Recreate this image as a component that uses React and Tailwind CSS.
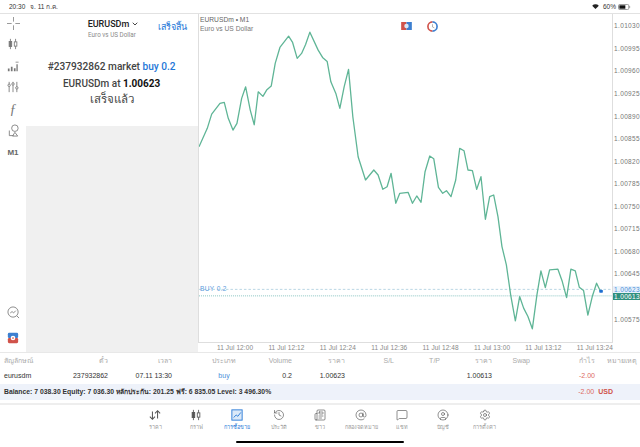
import { AtSign, ChevronDown, CircleUser, History, MessageSquare, Newspaper, Settings } from "lucide-react";

const line =
  "199,146.7 207.3,128.3 211.7,114 220,103.3 224.3,102.3 228.3,118.3 233,130 237,123.3 241.7,98.3 245.7,86.7 250.3,110 254.3,124.7 258.3,91.7 263,96.3 266.7,90 271.3,86 275.3,63.3 280,47.3 288.7,36 292.7,42.3 297.3,58.3 301.7,53.3 305.7,44.3 310,32 318.3,50 322.7,57.3 327.3,61.3 331,81.7 336,93.3 340,108.3 344.3,86.7 348.7,69.3 353,116.7 357,146.7 358.3,156.7 365.7,180 374,170 378.3,175 383,189.3 387.3,186.7 391.3,173.3 396,203.3 400,193.3 408.3,192.3 412.7,203.3 417,196 421.3,202.3 425.3,171.7 430,156 434,158.7 438.7,187.3 443,193.3 446.7,190.7 451.3,196.7 456,180 460,148.3 464.3,150.7 468.3,170 472.7,170.7 477,189.3 481.3,176.7 485.7,219.3 490,196.7 494,195 498.3,216.7 502.3,246.7 506.7,265 511,295 515.7,321 520,296.7 524,308.3 528.3,316.7 532.7,329 537.3,295 541.3,271 545.7,287.7 550,270 558.3,269.3 562.7,281.7 567,297.7 571.3,269.3 575.7,271 579.7,287.3 584,290.7 588.3,315.3 592.7,296.7 597,283.3 601,291.7";

const prices = ["1.01030", "1.00995", "1.00960", "1.00925", "1.00890", "1.00855", "1.00820", "1.00785", "1.00750", "1.00715", "1.00680", "1.00645", "", "1.00575"];
const times = ["12:00", "12:12", "12:24", "12:36", "12:48", "13:00", "13:12", "13:24"];

const columns = "grid grid-cols-[56px_48px_64px_80px_40px_53px_49px_46px_52px_38px_65px_42px] pl-[4px]";

function Candles({ className }) {
  return (
    <svg viewBox="0 0 14 14" className={className} fill="none" stroke="currentColor">
      <path d="M4 1v12M10 1v12" strokeWidth="1" />
      <rect x="2.5" y="4" width="3" height="6" fill="currentColor" strokeWidth="1" />
      <rect x="8.5" y="4.5" width="3" height="5" fill="white" strokeWidth="1" />
    </svg>
  );
}

function ToolIcons() {
  return (
    <div className="flex w-[26px] shrink-0 flex-col items-center bg-white text-[#777]">
      <svg viewBox="0 0 14 14" className="mt-[3px] size-[13px]" fill="none" stroke="currentColor" strokeWidth="0.8">
        <path d="M7 0v5M7 9v5M0 7h5M9 7h5" />
      </svg>
      <Candles className="mt-[8px] size-[12px]" />
      <svg viewBox="0 0 14 14" className="mt-[10px] size-[12px]" fill="currentColor">
        <path d="M1 10h2v3H1zM4.5 8h2v5h-2zM8 9.500h2V13H8zM11 5h1.500v8H11zM10 2h3.500v1H10z" />
      </svg>
      <svg viewBox="0 0 14 14" className="mt-[9px] size-[12px]" fill="none" stroke="currentColor" strokeWidth="1">
        <path d="M2.500 1v12M7 1v12M11.500 1v12" />
        <circle cx="2.500" cy="5" r="1.400" fill="white" />
        <circle cx="7" cy="3.500" r="1.400" fill="white" />
        <circle cx="11.500" cy="8" r="1.400" fill="white" />
      </svg>
      <span className="mt-[10px] font-['Liberation_Serif',serif] text-[14px] leading-[14px] italic">ƒ</span>
      <svg viewBox="0 0 14 14" className="mt-[7px] size-[13px]" fill="none" stroke="currentColor" strokeWidth="0.9">
        <circle cx="8.500" cy="4.500" r="3.500" />
        <path d="M2.500 7v5.500H7M6 13l2.500-4 3 4z" />
      </svg>
      <span className="mt-[11px] text-[8px] leading-[10px] font-bold text-[#666]">M1</span>
      <div className="flex-1" />
      <svg viewBox="0 0 14 14" className="size-[13px]" fill="none" stroke="currentColor" strokeWidth="0.9">
        <circle cx="6.500" cy="6.500" r="5.500" />
        <path d="M3.500 7.500 5.500 6 7 7.500 9.500 5M10.500 10.500 13 13" />
      </svg>
      <svg viewBox="0 0 14 14" className="mt-[13px] mb-[8px] size-[12px]">
        <rect x="1" y="1" width="12" height="6" rx="1.500" fill="#3c7fd0" />
        <rect x="1" y="7" width="12" height="6" rx="1.500" fill="#d0524a" />
        <circle cx="7" cy="7" r="2.700" fill="white" />
        <circle cx="7" cy="7" r="1" fill="#d0524a" />
      </svg>
    </div>
  );
}

function OrderPanel() {
  return (
    <div className="flex w-[172px] shrink-0 flex-col bg-[#f0f0f0]">
      <div className="relative flex h-[112px] flex-col items-center bg-white font-['Roboto',sans-serif]">
        <div className="mt-[4px] ml-[3px] flex items-center text-[9px] leading-[12px] font-medium text-[#222]">
          EURUSDm
          <ChevronDown className="ml-[2px] size-[8px]" strokeWidth={2.500} />
        </div>
        <div className="mt-[1px] text-[6.300px] leading-[8px] text-[#8a8a8a]">Euro vs US Dollar</div>
        <span className="absolute top-[7px] right-[11px] text-[9px] leading-[12px] font-medium text-[#1f78d8]">เสร็จสิ้น</span>
        <div className="mt-[19px] text-center text-[11.500px] leading-[16.500px] font-medium whitespace-nowrap text-[#444]">
          <div className="scale-x-[0.88]">
            #237932862 market <span className="text-[#1f78d8]">buy 0.2</span>
          </div>
          <div className="scale-x-[0.87]">
            EURUSDm at <span className="font-bold text-[#111]">1.00623</span>
          </div>
          <div>เสร็จแล้ว</div>
        </div>
      </div>
    </div>
  );
}

function Chart() {
  return (
    <div className="flex min-w-0 flex-1 flex-col">
      <div className="flex h-[329px]">
        <div className="relative w-[415px] border-r border-b border-l border-[#dedede]">
          <svg viewBox="199 14 413 328" className="h-full w-full" fill="none">
            <path d="M199 289.500H612" stroke="#9cc4d8" strokeWidth="0.700" strokeDasharray="2.500 2" />
            <path d="M199 296H612" stroke="#7fc0bc" strokeWidth="0.900" strokeDasharray="1 1" />
            <polyline points={line} stroke="#5fb596" strokeWidth="1.300" strokeLinejoin="round" />
            <path d="M599.500 290.500 601.500 289.500 603.500 290.500 603 293H600z" fill="#1e6fd0" />
          </svg>
          <div className="absolute top-[1px] left-[1px] text-[6.700px] leading-[9px] text-[#777]">
            <div className="font-medium text-[#666]">EURUSDm • M1</div>
            <div className="mt-[-0.500px]">Euro vs US Dollar</div>
          </div>
          <div className="absolute top-[271px] left-[1px] text-[6.500px] leading-[8px] tracking-[0.400px] text-[#5c9bdc]">BUY 0.2</div>
          <svg viewBox="0 0 12 9" className="absolute top-[8px] left-[202px] h-[8px] w-[11px]">
            <rect x="0" y="0" width="6" height="9" fill="#d0524a" />
            <rect x="6" y="0" width="6" height="9" fill="#3c7fd0" />
            <circle cx="6" cy="4.500" r="2.500" fill="#dbe6f3" />
          </svg>
          <svg viewBox="0 0 12 12" className="absolute top-[7px] left-[228px] size-[11px]" fill="none">
            <path d="M6 1a5 5 0 0 0 0 10" stroke="#d0524a" strokeWidth="1.800" />
            <path d="M6 1a5 5 0 0 1 0 10" stroke="#3c7fd0" strokeWidth="1.800" />
            <path d="M6 3.500v3l2 1" stroke="#999" strokeWidth="0.800" />
          </svg>
        </div>
        <div className="relative flex-1 pt-[1px] pl-[1.500px] text-[6.500px] tracking-[0.350px] text-[#777]">
          {prices.map((p, i) => (
            <div key={i} className="flex h-[22.550px] items-center">
              {p}
            </div>
          ))}
          <div className="absolute top-[272px] left-0 h-[7px] w-full bg-[#e8f1fb] pl-[1.500px] leading-[7px] text-[#4a90d9]">1.00623</div>
          <div className="absolute top-[279px] left-0 h-[7px] w-full bg-[#2f8f7e] pl-[1.500px] leading-[7px] text-white">1.00613</div>
        </div>
      </div>
      <div className="flex h-[9px] items-center pl-[19px] text-[6.500px] tracking-[0.100px] whitespace-nowrap text-[#888]">
        {times.map((t) => (
          <div key={t} className="w-[51.400px]">
            11 Jul {t}
          </div>
        ))}
      </div>
    </div>
  );
}

function Table() {
  return (
    <div className="border-t border-[#e8e8e8] text-[7px] whitespace-nowrap">
      <div className={`${columns} h-[16px] items-center text-[#aaa]`}>
        <div>สัญลักษณ์</div>
        <div className="text-right">ตั๋ว</div>
        <div className="text-right">เวลา</div>
        <div className="pl-[24px] text-center">ประเภท</div>
        <div className="text-right">Volume</div>
        <div className="text-right">ราคา</div>
        <div className="text-right">S/L</div>
        <div className="text-right">T/P</div>
        <div className="text-right">ราคา</div>
        <div className="text-right">Swap</div>
        <div className="text-right">กำไร</div>
        <div className="text-right">หมายเหตุ</div>
      </div>
      <div className={`${columns} h-[15px] items-center text-[#333]`}>
        <div>eurusdm</div>
        <div className="text-right">237932862</div>
        <div className="text-right">07.11 13:30</div>
        <div className="pl-[24px] text-center text-[#4a90d9]">buy</div>
        <div className="text-right">0.2</div>
        <div className="text-right">1.00623</div>
        <div />
        <div />
        <div className="text-right">1.00613</div>
        <div />
        <div className="text-right text-[#dc6a62]">-2.00</div>
        <div />
      </div>
      <div className="flex h-[16px] items-center bg-[#eef2fa] pl-[4px]">
        <div className="text-[6.800px] font-bold text-[#333]">Balance: 7 038.30 Equity: 7 036.30 หลักประกัน: 201.25 ฟรี: 6 835.05 Level: 3 496.30%</div>
        <div className="ml-auto text-[#dc6a62]">-2.00</div>
        <div className="mr-[27px] ml-[4px] font-bold text-[#d0524a]">USD</div>
      </div>
    </div>
  );
}

const tabs = [
  { label: "ราคา", icon: "trade" },
  { label: "กราฟ", icon: "candles" },
  { label: "การซื้อขาย", icon: "active" },
  { label: "ประวัติ", Icon: History },
  { label: "ข่าว", Icon: Newspaper },
  { label: "กล่องจดหมาย", Icon: AtSign },
  { label: "แชท", Icon: MessageSquare },
  { label: "บัญชี", Icon: CircleUser },
  { label: "การตั้งค่า", Icon: Settings }
];

function TabIcon({ tab }) {
  if (tab.Icon) return <tab.Icon className="size-[12px]" strokeWidth={1.300} />;
  if (tab.icon === "candles") return <Candles className="size-[12px]" />;
  if (tab.icon === "trade") {
    return (
      <svg viewBox="0 0 14 14" className="size-[12px]" fill="none" stroke="currentColor" strokeWidth="1.200">
        <path d="M4 3v9M1 9l3 3 3-3M10 11V2M7 5l3-3 3 3" />
      </svg>
    );
  }
  return (
    <svg viewBox="0 0 14 14" className="size-[12px]" fill="none" stroke="currentColor" strokeWidth="1.100">
      <rect x="1" y="1" width="12" height="12" fill="#dbe9f8" />
      <path d="M3 10 6 7l2 1.500L11.500 4" />
    </svg>
  );
}

function TabBar() {
  return (
    <div className="relative mt-[3px] flex-1 border-t-2 border-[#eee] pl-[134.500px]">
      <div className="flex">
        {tabs.map((tab) => (
          <div
            key={tab.label}
            className={`flex w-[41.200px] flex-col items-center pt-[4px] ${tab.icon === "active" ? "text-[#2f7ed8]" : "text-[#555]"}`}
          >
            <TabIcon tab={tab} />
            <span className={`mt-[2px] text-[5.500px] leading-[8px] whitespace-nowrap ${tab.icon === "active" ? "text-[#2f7ed8]" : "text-[#999]"}`}>
              {tab.label}
            </span>
          </div>
        ))}
      </div>
      <div className="absolute bottom-[4px] left-[236px] h-[2px] w-[168px] rounded-full bg-black" />
    </div>
  );
}

export default function App() {
  return (
    <div className="flex h-[447px] w-[640px] flex-col overflow-hidden bg-white font-['Liberation_Sans','Noto_Sans',sans-serif]">
      <div className="flex h-[13px] items-center justify-between px-[9px] text-[6.500px] font-medium text-[#333]">
        <div>
          20:30 <span className="ml-[3px]">จ. 11 ก.ค.</span>
        </div>
        <div className="flex items-center gap-[2px]">
          <svg viewBox="0 0 12 9" className="mr-[2px] h-[5px] w-[7px]" fill="#222">
            <path d="M6 9 0 3a8.500 8.500 0 0 1 12 0z" />
          </svg>
          <span>60%</span>
          <svg viewBox="0 0 15 7" className="h-[6px] w-[13px]" fill="none">
            <rect x="0.500" y="0.500" width="12" height="6" rx="1.500" stroke="#888" />
            <rect x="1.500" y="1.500" width="7" height="4" fill="#111" />
            <path d="M13.500 2.500v2" stroke="#888" />
          </svg>
        </div>
      </div>
      <div className="flex h-[339px] border-t border-[#e2e2e2]">
        <ToolIcons />
        <OrderPanel />
        <Chart />
      </div>
      <Table />
      <TabBar />
    </div>
  );
}
